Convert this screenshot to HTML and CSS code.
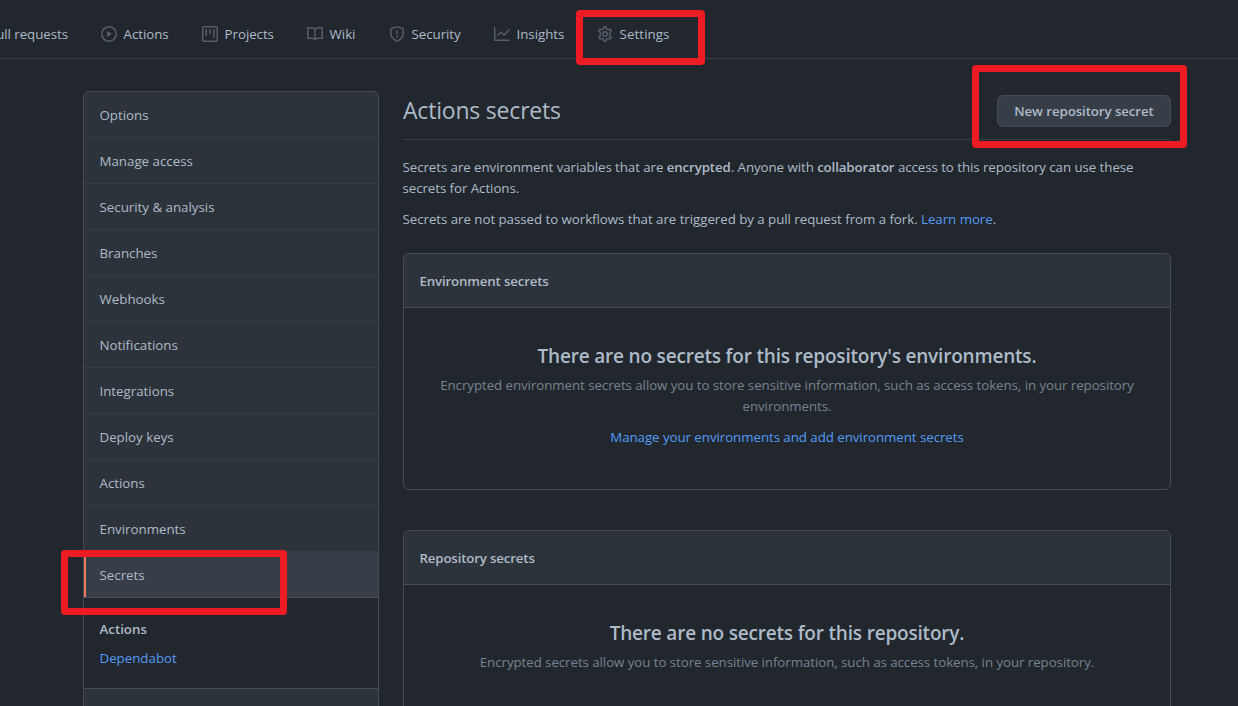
FILE: index.html
```html
<!DOCTYPE html>
<html lang="en">
<head>
<meta charset="utf-8">
<title>Actions secrets</title>
<link rel="stylesheet" href="styles.css">
</head>
<body>
<nav class="repo-nav">
  <a class="nav-item nav-first">Pull requests</a>
  <a class="nav-item"><svg class="icon" viewBox="0 0 16 16"><path fill-rule="evenodd" d="M1.5 8a6.5 6.5 0 1113 0 6.5 6.5 0 01-13 0zM8 0a8 8 0 100 16A8 8 0 008 0zM6.379 5.227A.25.25 0 006 5.442v5.117a.25.25 0 00.379.214l4.264-2.559a.25.25 0 000-.428L6.379 5.227z"/></svg><span>Actions</span></a>
  <a class="nav-item"><svg class="icon" viewBox="0 0 16 16"><path fill-rule="evenodd" d="M1.75 0A1.75 1.75 0 000 1.75v12.5C0 15.216.784 16 1.75 16h12.5A1.75 1.75 0 0016 14.25V1.75A1.75 1.75 0 0014.25 0H1.75zM1.5 1.75a.25.25 0 01.25-.25h12.5a.25.25 0 01.25.25v12.5a.25.25 0 01-.25.25H1.75a.25.25 0 01-.25-.25V1.75zM11.75 3a.75.75 0 00-.75.75v7.5a.75.75 0 001.5 0v-7.5a.75.75 0 00-.75-.75zm-8.25.75a.75.75 0 011.5 0v5.5a.75.75 0 01-1.5 0v-5.5zM8 3a.75.75 0 00-.75.75v3.5a.75.75 0 001.5 0v-3.5A.75.75 0 008 3z"/></svg><span>Projects</span></a>
  <a class="nav-item"><svg class="icon" viewBox="0 0 16 16"><path fill-rule="evenodd" d="M0 1.75A.75.75 0 01.75 1h4.253c1.227 0 2.317.59 3 1.501A3.744 3.744 0 0111.006 1h4.245a.75.75 0 01.75.75v10.5a.75.75 0 01-.75.75h-4.507a2.25 2.25 0 00-1.591.659l-.622.621a.75.75 0 01-1.06 0l-.622-.621A2.25 2.25 0 005.258 13H.75a.75.75 0 01-.75-.75V1.75zm8.755 3a2.25 2.25 0 012.25-2.25H14.5v9h-3.757c-.71 0-1.4.201-1.992.572l.004-7.322zm-1.504 7.324l.004-5.073-.002-2.253A2.25 2.25 0 005.003 2.5H1.5v9h3.757a3.75 3.75 0 011.994.574z"/></svg><span>Wiki</span></a>
  <a class="nav-item"><svg class="icon" viewBox="0 0 16 16"><path fill-rule="evenodd" d="M7.467.133a1.75 1.75 0 011.066 0l5.25 1.68A1.75 1.75 0 0115 3.48V7c0 1.566-.32 3.182-1.303 4.682-.983 1.498-2.585 2.813-5.032 3.855a1.7 1.7 0 01-1.33 0c-2.447-1.042-4.049-2.357-5.032-3.855C1.32 10.182 1 8.566 1 7V3.48a1.75 1.75 0 011.217-1.667l5.25-1.68zm.61 1.429a.25.25 0 00-.153 0l-5.25 1.68a.25.25 0 00-.174.238V7c0 1.358.275 2.666 1.057 3.86.784 1.194 2.121 2.34 4.366 3.297a.2.2 0 00.154 0c2.245-.956 3.582-2.104 4.366-3.298C13.225 9.666 13.5 8.36 13.5 7V3.48a.25.25 0 00-.174-.237l-5.25-1.68zM9 10.5a1 1 0 11-2 0 1 1 0 012 0zm-.25-5.75a.75.75 0 10-1.5 0v3a.75.75 0 001.5 0v-3z"/></svg><span>Security</span></a>
  <a class="nav-item"><svg class="icon" viewBox="0 0 16 16"><path fill-rule="evenodd" d="M1.5 1.75a.75.75 0 00-1.5 0v12.5c0 .414.336.75.75.75h14.5a.75.75 0 000-1.5H1.5V1.75zm14.28 2.53a.75.75 0 00-1.06-1.06L10 7.94 7.53 5.47a.75.75 0 00-1.06 0L3.22 8.72a.75.75 0 001.06 1.06L7 7.06l2.47 2.47a.75.75 0 001.06 0l5.25-5.25z"/></svg><span>Insights</span></a>
  <a class="nav-item nav-settings"><svg class="icon" viewBox="0 0 16 16"><g fill="none" stroke="currentColor" stroke-width="1.5" stroke-linejoin="round"><path d="M6.9.9Q8 .6 9.1.9L9.5 2.8 11.1 3.7 13 3.1Q13.8 3.9 14.1 5L12.7 6.4V9.6L14.1 11Q13.8 12.1 13 12.9L11.1 12.3 9.5 13.2 9.1 15.1Q8 15.4 6.9 15.1L6.5 13.2 4.9 12.3 3 12.9Q2.2 12.1 1.9 11L3.3 9.6V6.4L1.9 5Q2.2 3.9 3 3.1L4.9 3.7 6.5 2.8Z"/><circle cx="8" cy="8" r="2.25"/></g></svg><span>Settings</span></a>
</nav>
<div class="layout">
  <aside class="menu">
    <a class="menu-item">Options</a>
    <a class="menu-item">Manage access</a>
    <a class="menu-item">Security &amp; analysis</a>
    <a class="menu-item">Branches</a>
    <a class="menu-item">Webhooks</a>
    <a class="menu-item">Notifications</a>
    <a class="menu-item">Integrations</a>
    <a class="menu-item">Deploy keys</a>
    <a class="menu-item">Actions</a>
    <a class="menu-item">Environments</a>
    <a class="menu-item selected">Secrets</a>
    <div class="submenu">
      <a class="sub-current">Actions</a>
      <a class="link">Dependabot</a>
    </div>
    <div class="menu-rest"></div>
  </aside>
  <main class="content">
    <header class="subhead">
      <h1>Actions secrets</h1>
      <button class="btn" type="button">New repository secret</button>
    </header>
    <p class="intro">Secrets are environment variables that are <b>encrypted</b>. Anyone with <b>collaborator</b> access to this repository can use these<br>secrets for Actions.</p>
    <p class="intro note">Secrets are not passed to workflows that are triggered by a pull request from a fork. <a class="link">Learn more</a>.</p>
    <section class="box">
      <h2 class="box-header">Environment secrets</h2>
      <div class="blank">
        <h3>There are no secrets for this repository's environments.</h3>
        <p class="muted">Encrypted environment secrets allow you to store sensitive information, such as access tokens, in your repository<br>environments.</p>
        <p class="manage"><a class="link">Manage your environments and add environment secrets</a></p>
      </div>
    </section>
    <section class="box box-open">
      <h2 class="box-header">Repository secrets</h2>
      <div class="blank">
        <h3>There are no secrets for this repository.</h3>
        <p class="muted">Encrypted secrets allow you to store sensitive information, such as access tokens, in your repository.</p>
      </div>
    </section>
  </main>
</div>
<div class="mark mark-settings"></div>
<div class="mark mark-new"></div>
<div class="mark mark-secrets"></div>
</body>
</html>
```

FILE: styles.css
```css
* { box-sizing: border-box; }
body {
  margin: 0;
  height: 706px;
  overflow: hidden;
  position: relative;
  background: #22272e;
  color: #adbac7;
  font: 13.3px/21px "Open Sans", "Noto Sans", sans-serif;
}
h1, h2, h3, p { margin: 0; }
b { font-weight: 600; letter-spacing: -0.12px; }
.link { color: #539bf5; }

.repo-nav {
  display: grid;
  grid-template-columns: 68px 101px 105px 82px 105px 103px 100px;
  height: 59px;
  padding-top: 10px;
  border-bottom: 1px solid #373e47;
  letter-spacing: -0.05px;
}
.nav-item {
  display: flex;
  align-items: center;
  gap: 6.6px;
  height: 48px;
  white-space: nowrap;
}
.nav-item:not(.nav-first) { margin-left: 33px; margin-right: -33px; }
.nav-first { justify-content: flex-end; overflow: hidden; }
.nav-settings { letter-spacing: 0.08px; }
.icon { width: 16px; height: 16px; flex: none; fill: #545d68; color: #545d68; }

.layout {
  display: grid;
  grid-template-columns: 296px 768px;
  column-gap: 24px;
  height: 647px;
  padding: 32px 0 0 83px;
}
.menu {
  height: 615px;
  border: 1px solid #444c56;
  border-bottom: 0;
  border-radius: 6px 6px 0 0;
  overflow: hidden;
}
.menu-item {
  display: block;
  height: 46px;
  padding: 13px 15.5px 11px;
  background: #2d333b;
  border-bottom: 1px solid #373e47;
}
.selected {
  background: #373e47;
  border-bottom-color: #444c56;
  box-shadow: inset 2px 0 #ec775c;
}
.submenu {
  display: flex;
  flex-direction: column;
  gap: 8px;
  height: 91px;
  padding: 21px 15.5px 0;
  border-bottom: 1px solid #444c56;
}
.sub-current { font-weight: 600; }
.menu-rest { height: 17px; background: #2d333b; }

.subhead {
  display: flex;
  justify-content: space-between;
  align-items: flex-start;
  height: 49px;
  padding-top: 4px;
  margin-bottom: 17px;
  border-bottom: 1px solid #373e47;
}
h1 { font-size: 23px; line-height: 31px; font-weight: 400; letter-spacing: -0.2px; }
.btn {
  width: 174px;
  height: 32px;
  padding: 0;
  border: 1px solid #444c56;
  border-radius: 6px;
  background: #373e47;
  color: #adbac7;
  font: 600 13.3px/20px "Open Sans", "Noto Sans", sans-serif;
  letter-spacing: -0.09px;
}
.intro { margin-left: -0.5px; white-space: nowrap; letter-spacing: -0.06px; }
.note { margin-top: 10px; margin-bottom: 23px; letter-spacing: -0.04px; }
.box {
  height: 237px;
  margin-bottom: 40px;
  border: 1px solid #444c56;
  border-radius: 6px;
  overflow: hidden;
}
.box-open {
  height: 176px;
  margin-bottom: 0;
  border-bottom: 0;
  border-radius: 6px 6px 0 0;
}
.box-header {
  height: 54px;
  padding: 17px 15.5px 16px;
  border-bottom: 1px solid #444c56;
  background: #2d333b;
  font-size: 13.3px;
  line-height: 21px;
  font-weight: 600;
  letter-spacing: -0.17px;
}
.blank { padding-top: 33px; text-align: center; white-space: nowrap; }
h3 { font-size: 19px; line-height: 30px; font-weight: 600; letter-spacing: -0.19px; }
.muted { margin-top: 4px; color: #768390; letter-spacing: -0.06px; }
.manage { margin-top: 10px; letter-spacing: -0.05px; }

.mark { position: absolute; border: 7px solid #ed1c24; border-radius: 4px; }
.mark-settings { left: 576px; top: 10px; width: 129px; height: 55px; }
.mark-new { left: 972px; top: 65px; width: 215px; height: 83px; }
.mark-secrets { left: 61px; top: 550px; width: 226px; height: 65px; }
```
